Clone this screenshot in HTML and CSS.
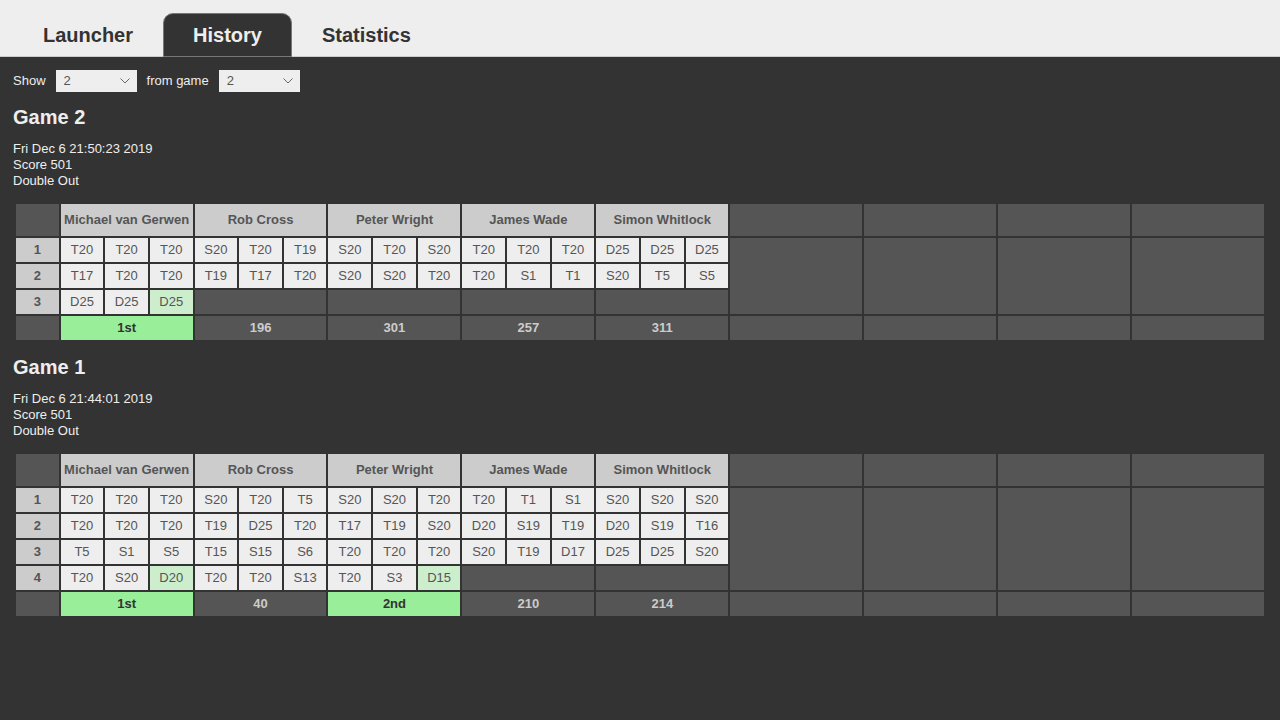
FILE: index.html
```html
<!DOCTYPE html>
<html lang="en">
<head>
<meta charset="utf-8">
<meta name="viewport" content="width=device-width, initial-scale=1">
<title>History</title>
<link rel="stylesheet" href="styles.css">
</head>
<body>
<nav class="tabs">
<a class="tab" href="#launcher">Launcher</a>
<a class="tab active" href="#history" aria-current="page">History</a>
<a class="tab" href="#statistics">Statistics</a>
</nav>
<main class="history">
<form class="filter">
<label for="count">Show</label>
<span class="picker">
<select id="count"><option>1</option><option selected>2</option></select>
<svg class="chevron" viewBox="0 0 10 6" aria-hidden="true"><path d="M0.5 0.5 5 5 9.5 0.5"/></svg>
</span>
<label for="start">from game</label>
<span class="picker">
<select id="start"><option>1</option><option selected>2</option></select>
<svg class="chevron" viewBox="0 0 10 6" aria-hidden="true"><path d="M0.5 0.5 5 5 9.5 0.5"/></svg>
</span>
</form>

<section class="game">
<h2>Game 2</h2>
<p>Fri Dec 6 21:50:23 2019<br>Score 501<br>Double Out</p>
<table>
<colgroup><col span="28"></colgroup>
<thead>
<tr class="players"><td class="empty"></td><th colspan="3">Michael van Gerwen</th><th colspan="3">Rob Cross</th><th colspan="3">Peter Wright</th><th colspan="3">James Wade</th><th colspan="3">Simon Whitlock</th><td class="empty" colspan="3"></td><td class="empty" colspan="3"></td><td class="empty" colspan="3"></td><td class="empty" colspan="3"></td></tr>
</thead>
<tbody>
<tr><th>1</th><td>T20</td><td>T20</td><td>T20</td><td>S20</td><td>T20</td><td>T19</td><td>S20</td><td>T20</td><td>S20</td><td>T20</td><td>T20</td><td>T20</td><td>D25</td><td>D25</td><td>D25</td><td class="empty" colspan="3" rowspan="3"></td><td class="empty" colspan="3" rowspan="3"></td><td class="empty" colspan="3" rowspan="3"></td><td class="empty" colspan="3" rowspan="3"></td></tr>
<tr><th>2</th><td>T17</td><td>T20</td><td>T20</td><td>T19</td><td>T17</td><td>T20</td><td>S20</td><td>S20</td><td>T20</td><td>T20</td><td>S1</td><td>T1</td><td>S20</td><td>T5</td><td>S5</td></tr>
<tr><th>3</th><td>D25</td><td>D25</td><td class="checkout">D25</td><td class="empty" colspan="3"></td><td class="empty" colspan="3"></td><td class="empty" colspan="3"></td><td class="empty" colspan="3"></td></tr>
</tbody>
<tfoot>
<tr><td></td><td class="placed" colspan="3">1st</td><td colspan="3">196</td><td colspan="3">301</td><td colspan="3">257</td><td colspan="3">311</td><td colspan="3"></td><td colspan="3"></td><td colspan="3"></td><td colspan="3"></td></tr>
</tfoot>
</table>
</section>

<section class="game">
<h2>Game 1</h2>
<p>Fri Dec 6 21:44:01 2019<br>Score 501<br>Double Out</p>
<table>
<colgroup><col span="28"></colgroup>
<thead>
<tr class="players"><td class="empty"></td><th colspan="3">Michael van Gerwen</th><th colspan="3">Rob Cross</th><th colspan="3">Peter Wright</th><th colspan="3">James Wade</th><th colspan="3">Simon Whitlock</th><td class="empty" colspan="3"></td><td class="empty" colspan="3"></td><td class="empty" colspan="3"></td><td class="empty" colspan="3"></td></tr>
</thead>
<tbody>
<tr><th>1</th><td>T20</td><td>T20</td><td>T20</td><td>S20</td><td>T20</td><td>T5</td><td>S20</td><td>S20</td><td>T20</td><td>T20</td><td>T1</td><td>S1</td><td>S20</td><td>S20</td><td>S20</td><td class="empty" colspan="3" rowspan="4"></td><td class="empty" colspan="3" rowspan="4"></td><td class="empty" colspan="3" rowspan="4"></td><td class="empty" colspan="3" rowspan="4"></td></tr>
<tr><th>2</th><td>T20</td><td>T20</td><td>T20</td><td>T19</td><td>D25</td><td>T20</td><td>T17</td><td>T19</td><td>S20</td><td>D20</td><td>S19</td><td>T19</td><td>D20</td><td>S19</td><td>T16</td></tr>
<tr><th>3</th><td>T5</td><td>S1</td><td>S5</td><td>T15</td><td>S15</td><td>S6</td><td>T20</td><td>T20</td><td>T20</td><td>S20</td><td>T19</td><td>D17</td><td>D25</td><td>D25</td><td>S20</td></tr>
<tr><th>4</th><td>T20</td><td>S20</td><td class="checkout">D20</td><td>T20</td><td>T20</td><td>S13</td><td>T20</td><td>S3</td><td class="checkout">D15</td><td class="empty" colspan="3"></td><td class="empty" colspan="3"></td></tr>
</tbody>
<tfoot>
<tr><td></td><td class="placed" colspan="3">1st</td><td colspan="3">40</td><td class="placed" colspan="3">2nd</td><td colspan="3">210</td><td colspan="3">214</td><td colspan="3"></td><td colspan="3"></td><td colspan="3"></td><td colspan="3"></td></tr>
</tfoot>
</table>
</section>
</main>
</body>
</html>
```
FILE: styles.css
```css
* {
  box-sizing: border-box;
}

body {
  margin: 0;
  background: #333;
  color: #eee;
  font: 13px/16px "Liberation Sans", Arial, sans-serif;
}

.tabs {
  display: flex;
  padding: 13px 13px 0;
  background: #eee;
  border-bottom: 1px solid #ccc;
}

.tab {
  margin-bottom: -1px;
  padding: 9px 29px;
  border: 1px solid transparent;
  border-radius: 10px 10px 0 0;
  color: #333;
  font-size: 20px;
  font-weight: bold;
  line-height: 24px;
  text-decoration: none;
}

.tab.active {
  background: #333;
  border-color: #777;
  color: #eee;
}

.history {
  padding: 13px;
}

.filter {
  display: flex;
  align-items: center;
  gap: 10px;
}

.picker {
  display: grid;
  align-items: center;
}

.picker > * {
  grid-area: 1 / 1;
}

.picker select {
  appearance: none;
  width: 81px;
  height: 22px;
  margin: 0;
  padding: 0 24px 0 8px;
  border: 0;
  border-radius: 0;
  background: #eee;
  color: #555;
  font: inherit;
}

.chevron {
  justify-self: end;
  width: 10px;
  height: 6px;
  margin-right: 7px;
  fill: none;
  stroke: #666;
  pointer-events: none;
}

.game {
  margin-top: 13px;
}

.game h2 {
  margin: 0;
  font-size: 20px;
  line-height: 24px;
}

.game p {
  margin: 12px 0 13px;
}

table {
  width: 100%;
  padding: 0 1px;
  table-layout: fixed;
  border-collapse: separate;
  border-spacing: 2px;
}

th,
td {
  height: 24px;
  padding: 0;
  background: #eee;
  color: #555;
  text-align: center;
  white-space: nowrap;
}

th {
  background: #ccc;
}

.players > * {
  height: 32px;
}

.empty {
  background: #555;
}

.checkout {
  background: #cec;
}

tfoot td {
  background: #555;
  color: #ccc;
  font-weight: bold;
}

tfoot .placed {
  background: #9e9;
  color: #333;
}
```
